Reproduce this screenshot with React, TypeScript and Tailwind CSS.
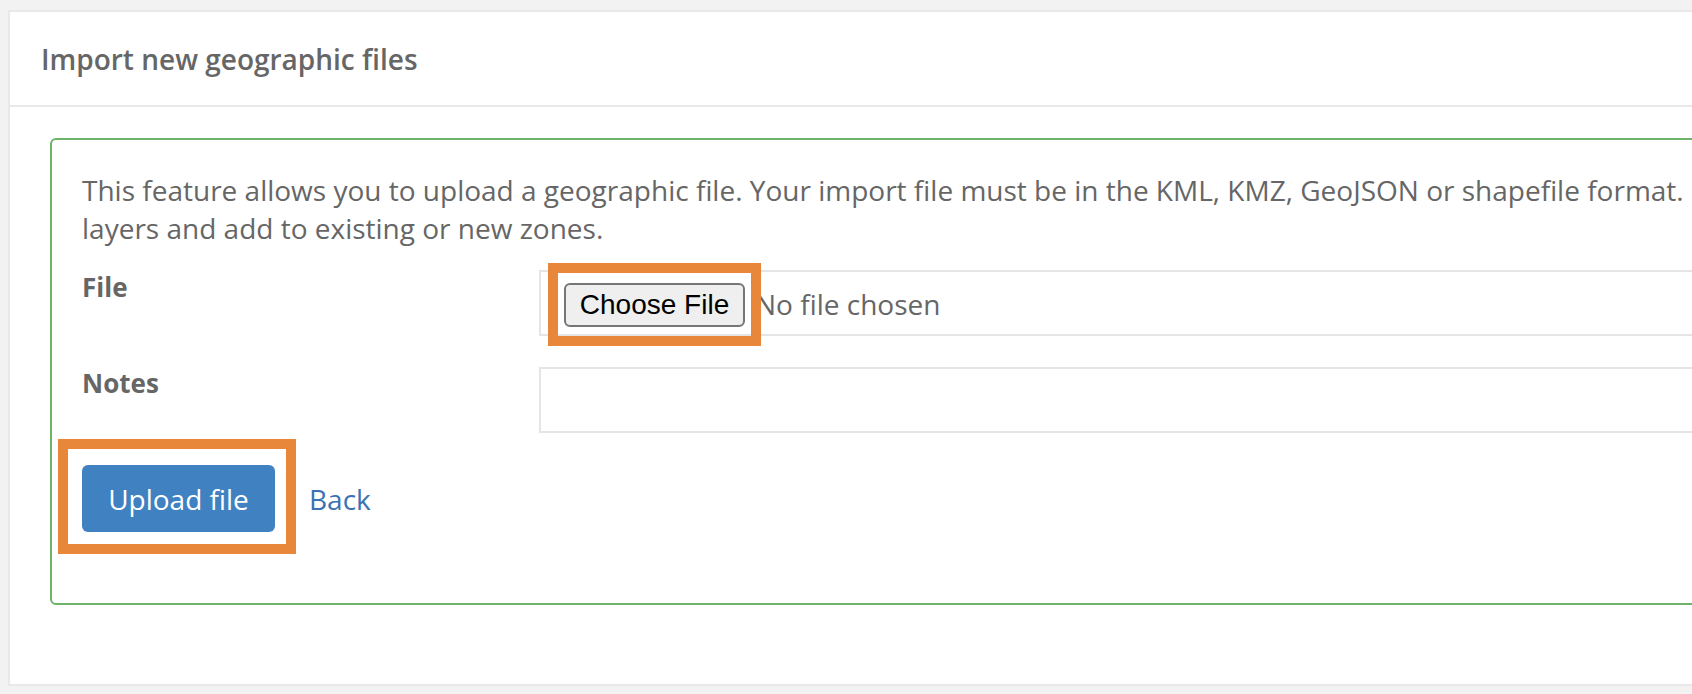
import React from 'react'

function FileField() {
  return (
    <div className="relative mt-[2px] flex h-[66px] flex-1 items-start border-2 border-[#e5e5e5] bg-white pl-[23px] pt-[11px]">
      <button
        type="button"
        className="h-[44px] w-[181px] shrink-0 rounded-[6px] border-2 border-[#767676] bg-[#efefef] font-['Liberation_Sans',Arial,sans-serif] text-[28px] leading-none text-black"
      >
        Choose File
      </button>
      <span className="ml-[10px] text-[28px] leading-[42px] text-[#666]">No file chosen</span>
      {/* annotation box */}
      <div className="pointer-events-none absolute left-[7px] top-[-9px] h-[83px] w-[213px] border-[10px] border-[#e8873a]" />
    </div>
  )
}

export default function App() {
  return (
    <div className="h-[694px] w-full overflow-hidden bg-[#f2f2f2] pl-[8px] pt-[10px] font-['Open_Sans',sans-serif] text-[#666]">
      <div className="h-[676px] w-[1760px] border-2 border-[#e8e8e8] bg-white">
        <div className="flex h-[95px] items-center border-b-2 border-[#e8e8e8] pl-[31px]">
          <h1 className="text-[28px] font-semibold">Import new geographic files</h1>
        </div>

        <div className="ml-[40px] mt-[31px] rounded-[6px] border-2 border-[#6db36a] px-[30px] pb-[71px] pt-[31px]">
          <p className="text-[28px] leading-[38px]">
            <span className="whitespace-nowrap">
              This feature allows you to upload a geographic file. Your import file must be in the KML, KMZ, GeoJSON or shapefile format.
            </span>
            <br />
            layers and add to existing or new zones.
          </p>

          <div className="mt-[21px] flex items-start">
            <label className="w-[457px] shrink-0 text-[26px] font-bold leading-[38px]">File</label>
            <FileField />
          </div>

          <div className="mt-[28px] flex items-start">
            <label className="w-[457px] shrink-0 text-[26px] font-bold leading-[38px]">Notes</label>
            <div className="mt-[3px] h-[66px] flex-1 border-2 border-[#e5e5e5] bg-white" />
          </div>

          <div className="mt-[32px] flex items-center">
            <div className="relative">
              <button
                type="button"
                className="h-[67px] w-[193px] rounded-[6px] bg-[#3f81c1] text-[28px] text-white"
              >
                Upload file
              </button>
              <div className="pointer-events-none absolute left-[-24px] top-[-26px] h-[115px] w-[238px] border-[10px] border-[#e8873a]" />
            </div>
            <a href="#" className="ml-[34px] text-[28px] text-[#3a72b4]">
              Back
            </a>
          </div>
        </div>
      </div>
    </div>
  )
}
